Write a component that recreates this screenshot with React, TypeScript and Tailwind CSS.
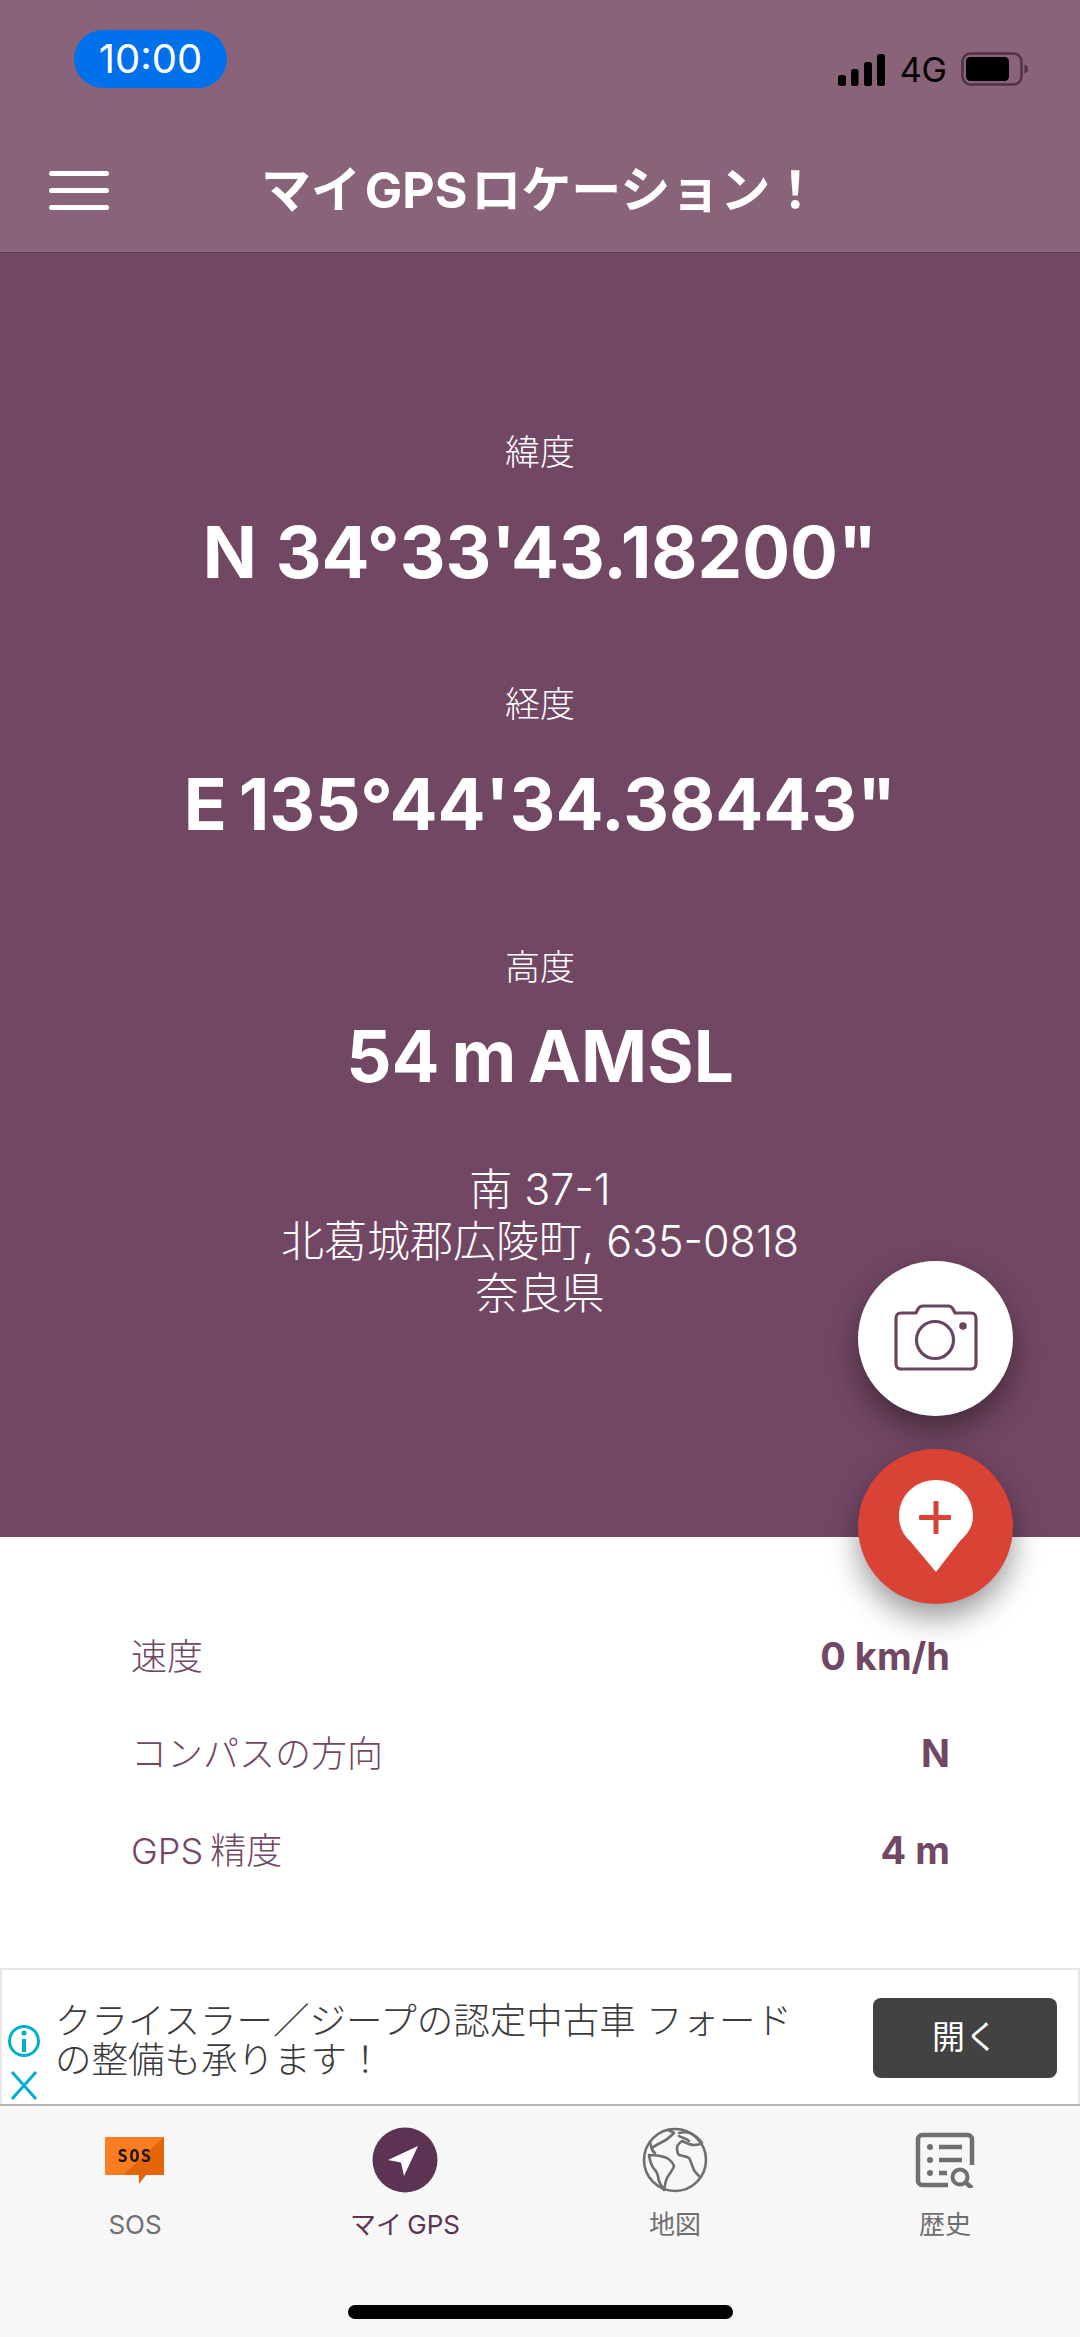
const jp = "font-['Inter','Noto_Sans_CJK_JP',sans-serif]";

function Signal() {
  return (
    <svg width="48" height="32" viewBox="0 0 48 32" className="block">
      <rect x="0" y="21" width="8" height="11" rx="2.5" fill="#000" />
      <rect x="13" y="15" width="7.5" height="17" rx="2.5" fill="#000" />
      <rect x="26" y="8" width="8" height="24" rx="2.5" fill="#000" />
      <rect x="39" y="0" width="8" height="32" rx="2.5" fill="#000" />
    </svg>
  );
}

function Battery() {
  return (
    <svg width="68" height="34" viewBox="0 0 68 34" className="block">
      <rect x="1.500" y="1.500" width="59" height="31" rx="8" fill="none" stroke="#4f3248" strokeWidth="2.500" />
      <rect x="5" y="5" width="43" height="24" rx="4.500" fill="#000" />
      <path d="M63.500 12.500c2.600 .6 3.500 2.500 3.500 4.500s-.9 3.900-3.500 4.500z" fill="#4f3248" />
    </svg>
  );
}

function Camera() {
  return (
    <svg width="84" height="68" viewBox="0 0 84 68" fill="none" stroke="#6a4560" strokeWidth="3.200" className="block -mt-[2px]">
      <path d="M7 9h15l2-4c1-2 3-3 5-3h25c2 0 4 1 5 3l2 4h16c3 0 5 2 5 5v46c0 3-2 5-5 5H7c-3 0-5-2-5-5V14c0-3 2-5 5-5z" strokeLinejoin="round" />
      <circle cx="41" cy="36" r="18.500" />
      <circle cx="69" cy="22" r="3.800" fill="#6a4560" stroke="none" />
    </svg>
  );
}

function PinPlus() {
  return (
    <svg width="76" height="94" viewBox="0 0 76 94" className="block -mt-[2px]">
      <path d="M38 1C17 1 1 17 1 37c0 10 4 19 11 25l26 31 24-31c8-7 13-15 13-25C75 17 59 1 38 1z" fill="#fff" />
      <rect x="35.500" y="22" width="5" height="33" rx="1" fill="#d94235" />
      <rect x="21" y="36" width="32" height="5" rx="1" fill="#d94235" />
    </svg>
  );
}

function SosIcon() {
  return (
    <div className="relative w-[60px] h-[47px]">
      <svg width="60" height="47" viewBox="0 0 60 47" className="absolute left-0 top-0">
        <path d="M0 0h59v38H41l-7 9v-9H0z" fill="#e46508" />
        <path d="M0 0h59L18 38H0z" fill="#fb7d22" />
      </svg>
      <span className="absolute left-0 right-0 top-[6px] text-center text-[#1d130c] text-[17px] leading-[26px] font-bold tracking-[1.5px] font-['DejaVu_Sans_Mono','Liberation_Mono',monospace]">SOS</span>
    </div>
  );
}

function NavIcon() {
  return (
    <svg width="66" height="66" viewBox="0 0 66 66" className="block">
      <circle cx="33" cy="33" r="32.500" fill="#5c3352" />
      <path d="M46 19 16 33l13 2.500 3 13.500z" fill="#fff" />
    </svg>
  );
}

function GlobeIcon() {
  return (
    <svg width="66" height="66" viewBox="0 0 66 66" fill="none" stroke="#6f6f6f" strokeWidth="2.600" strokeLinejoin="round" strokeLinecap="round" className="block">
      <circle cx="33" cy="33" r="31" />
      <path d="M26 3c2 1 5 2 6 3-3 3-6 6-10 8-4 2-8 4-12 7 0 2 1 4 3 5" />
      <path d="M8 15c1 3 1 5 2 7" />
      <path d="M7 28c6 0 13 1 18 3 3 2 6 5 7 8-1 4-5 8-7 12-2 4-2 8-3 12-2-3-4-6-5-9-1-4-1-8-4-11-3-3-5-8-6-15z" />
      <path d="M37 6c4-1 8-1 11 0 5 2 9 6 12 10-3 2-6 2-8 2-4 0-8-2-12-4-3 2-5 4-5 7 0 3 0 5 2 7 4 1 7 1 10 3 2 3 3 8 5 12 1 2 3 4 5 6" />
      <path d="M37 9c3 2 7 2 10 5" />
    </svg>
  );
}

function HistoryIcon() {
  return (
    <svg width="60" height="56" viewBox="0 0 60 56" fill="none" stroke="#6f6f6f" className="block">
      <path d="M33 53H7c-2 0-4-2-4-4V7c0-2 2-4 4-4h46c2 0 4 2 4 4v26" strokeWidth="4.500" />
      <circle cx="15" cy="15" r="3" fill="#6f6f6f" stroke="none" />
      <circle cx="15" cy="28" r="3" fill="#6f6f6f" stroke="none" />
      <circle cx="15" cy="41" r="3" fill="#6f6f6f" stroke="none" />
      <path d="M24 15h23M24 28h23M24 41h8" strokeWidth="4.500" />
      <circle cx="45" cy="45" r="7.500" strokeWidth="4" />
      <path d="m50 50 7 6" strokeWidth="4.500" />
    </svg>
  );
}

function Tab({ icon, label, active }: { icon: React.ReactNode; label: string; active?: boolean }) {
  return (
    <div className="flex flex-1 flex-col items-center">
      <div className="h-[66px] flex items-center justify-center">{icon}</div>
      <div className={`mt-[16px] text-[26px] leading-[32px] [word-spacing:-2px] ${active ? "text-[#5c3352]" : "text-[#6f6f6f]"}`}>{label}</div>
    </div>
  );
}

function Coord({ label, value, mt, gap, spacing }: { label: string; value: string; mt: string; gap: string; spacing: string }) {
  return (
    <div className={`flex flex-col items-center ${mt}`}>
      <div className="text-[35px] leading-[40px] text-white font-light">{label}</div>
      <div className={`${gap} ${spacing} text-[71px] leading-[88px] font-bold text-white`}>{value}</div>
    </div>
  );
}

function Stat({ label, value }: { label: string; value: string }) {
  return (
    <div className="flex h-[97px] items-center justify-between">
      <span className="text-[36px] text-[#724764] font-light [word-spacing:-3px]">{label}</span>
      <span className="text-[38px] font-bold text-[#724764]">{value}</span>
    </div>
  );
}

export default function App() {
  return (
    <div className={`relative w-[1080px] h-[2337px] overflow-hidden bg-white flex flex-col ${jp}`}>
      <header className="h-[253px] shrink-0 bg-[#88637a] border-b border-[#5b3a52] px-[49px] relative">
        <div className="flex items-start justify-between">
          <div className="mt-[30px] ml-[25px] w-[153px] h-[58px] rounded-[29px] bg-[#0071ea] flex items-center justify-center text-[40px] text-white">10:00</div>
          <div className="mt-[52px] mr-[2px] flex items-end gap-[14px]">
            <Signal />
            <span className="text-[34px] leading-[32px] text-black">4G</span>
            <Battery />
          </div>
        </div>
        <div className="mt-[72px] flex items-center">
          <div className="w-[60px] flex flex-col gap-[12px]">
            <div className="h-[5px] rounded-full bg-white" />
            <div className="h-[5px] rounded-full bg-white" />
            <div className="h-[5px] rounded-full bg-white" />
          </div>
          <h1 className="ml-[152px] text-[50px] leading-[60px] font-bold text-white [word-spacing:-8px]">マイ GPS ロケーション！</h1>
        </div>
      </header>

      <main className="h-[1284px] shrink-0 bg-[#724764] flex flex-col items-center">
        <Coord label="緯度" value={`N 34°33'43.18200"`} mt="mt-[179px]" gap="mt-[36px]" spacing="[word-spacing:2px]" />
        <Coord label="経度" value={`E 135°44'34.38443"`} mt="mt-[88px]" gap="mt-[36px]" spacing="[word-spacing:-5px]" />
        <Coord label="高度" value="54 m AMSL" mt="mt-[99px]" gap="mt-[25px]" spacing="[word-spacing:-5px]" />
        <div className="mt-[63px] text-center text-[43px] leading-[52px] text-white font-light">
          <div>南 37-1</div>
          <div>北葛城郡広陵町, 635-0818</div>
          <div>奈良県</div>
        </div>
      </main>

      <section className="h-[431px] shrink-0 bg-white pl-[131px] pr-[130px] pt-[71px]">
        <Stat label="速度" value="0 km/h" />
        <Stat label="コンパスの方向" value="N" />
        <Stat label="GPS 精度" value="4 m" />
      </section>

      <aside className="relative h-[136px] shrink-0 bg-white border-2 border-[#e6e6e6] border-b-0 pl-[53px] pr-[21px] flex items-center justify-between">
        <div className="pt-[7px] text-[36.5px] leading-[39px] text-[#3b3b3b] font-light">
          <div>クライスラー／ジープの認定中古車 フォード</div>
          <div>の整備も承ります！</div>
        </div>
        <div className="w-[184px] h-[80px] mt-[2px] rounded-[8px] bg-[#424242] flex items-center justify-center text-[33px] text-white">開く</div>
        <svg width="36" height="78" viewBox="0 0 36 78" fill="none" stroke="#00aecd" className="absolute left-[4px] top-[53px]">
          <circle cx="18" cy="18" r="14.500" strokeWidth="3" />
          <circle cx="18" cy="10" r="2.500" fill="#00aecd" stroke="none" />
          <path d="M18 16v13" strokeWidth="4" />
          <path d="M6 49l24 27M30 49 6 76" strokeWidth="3" />
        </svg>
      </aside>

      <nav className="relative flex-1 bg-[#f7f7f7] border-t-2 border-[#b5b5b5] pt-[21px] flex px-0">
        <Tab icon={<SosIcon />} label="SOS" />
        <Tab icon={<NavIcon />} label="マイ GPS" active />
        <Tab icon={<GlobeIcon />} label="地図" />
        <Tab icon={<HistoryIcon />} label="歴史" />
        <div className="absolute left-[348px] top-[199px] w-[385px] h-[14px] rounded-full bg-black" />
      </nav>

      <button className="absolute left-[858px] top-[1261px] w-[155px] h-[155px] rounded-full bg-white flex items-center justify-center shadow-[0_14px_30px_rgba(0,0,0,0.4)]">
        <Camera />
      </button>
      <button className="absolute left-[858px] top-[1449px] w-[155px] h-[155px] rounded-full bg-[#d94235] flex items-center justify-center shadow-[0_14px_30px_rgba(0,0,0,0.4)]">
        <PinPlus />
      </button>
    </div>
  );
}
